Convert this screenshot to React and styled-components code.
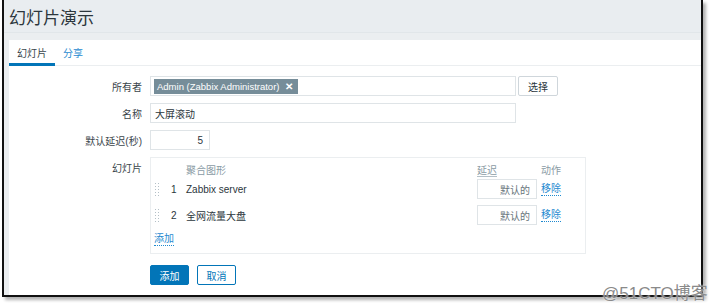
import React from "react";
import styled, { createGlobalStyle } from "styled-components";

const Global = createGlobalStyle`
  html, body { margin: 0; padding: 0; background: #fff; }
  body { font-family: "Liberation Sans", "Noto Sans CJK SC", sans-serif; color: #2b363c; }
  * { box-sizing: border-box; }
`;

const Page = styled.div`
  position: relative;
  width: 712px;
  height: 306px;
  overflow: hidden;
  padding-left: 2px;
`;

const Frame = styled.div`
  width: 701px;
  height: 297px;
  background: #ebeef0;
  border-left: 2px solid #111;
  border-right: 2px solid #111;
  border-bottom: 2px solid #111;
  box-shadow: 3px 3px 3px rgba(0, 0, 0, 0.3);
  display: flex;
  flex-direction: column;
`;

const Header = styled.div`
  height: 33px;
  padding-left: 5px;
  display: flex;
  align-items: center;
  border-bottom: 1px solid #e1e6e9;
  background: #e9edf0;
`;

const Title = styled.h1`
  margin: 0;
  font-size: 17px;
  font-weight: normal;
  color: #2b363c;
`;

const Card = styled.div`
  margin: 7px 0 0 5px;
  flex: 1;
  background: #fff;
`;

const Tabs = styled.div`
  display: flex;
  height: 26px;
  border-bottom: 1px solid #ebeef0;
`;

const Tab = styled.div`
  height: 26px;
  padding: 2px 8px 0 8px;
  font-size: 10px;
  display: flex;
  align-items: center;
  color: ${(p) => (p.$active ? "#3a454b" : "#1f8ad0")};
  border-bottom: 3px solid ${(p) => (p.$active ? "#0275b8" : "transparent")};
  margin-bottom: -1px;
`;

const Form = styled.div`
  display: grid;
  grid-template-columns: 133px auto;
  column-gap: 8px;
  row-gap: 7px;
  padding-top: 10px;
  align-items: center;
`;

const Label = styled.div`
  text-align: right;
  font-size: 10px;
  color: #3a454b;
  align-self: ${(p) => (p.$top ? "start" : "center")};
  padding-top: ${(p) => (p.$top ? "3px" : "0")};
`;

const Field = styled.div`
  display: flex;
  align-items: center;
  gap: 2px;
`;

const Input = styled.div`
  width: ${(p) => p.$w}px;
  height: 20px;
  border: 1px solid #dfe4e7;
  background: #fff;
  display: flex;
  align-items: center;
  justify-content: ${(p) => (p.$right ? "flex-end" : "flex-start")};
  padding: 0 ${(p) => (p.$right ? "6px" : "2px")} 0 ${(p) => (p.$right ? "2px" : "4px")};
  font-size: 10px;
  color: ${(p) => (p.$placeholder ? "#68757c" : "#2b363c")};
`;

const Tag = styled.span`
  display: inline-flex;
  align-items: center;
  gap: 6px;
  height: 15px;
  padding: 0 5px 0 3px;
  background: #768d99;
  color: #fff;
  font-size: 9.5px;
  margin-left: -1px;
`;

const TagX = styled.span`
  font-weight: bold;
  font-size: 10px;
`;

const Button = styled.div`
  width: ${(p) => p.$w || 40}px;
  height: 20px;
  display: flex;
  align-items: center;
  justify-content: center;
  font-size: 10px;
  border: 1px solid ${(p) => (p.$primary ? "#0275b8" : p.$outline ? "#0275b8" : "#cfd6db")};
  background: ${(p) => (p.$primary ? "#0275b8" : "#fff")};
  color: ${(p) => (p.$primary ? "#fff" : p.$outline ? "#0275b8" : "#2b363c")};
  border-radius: 2px;
`;

const Table = styled.div`
  width: 436px;
  border: 1px solid #ebeef0;
  padding: 0 0 6px 3px;
  display: grid;
  grid-template-columns: 6px 26px 291px 60px auto;
  grid-template-rows: 21px 26px 26px 16px;
  font-size: 10px;
`;

const Th = styled.div`
  grid-column: ${(p) => p.$col};
  color: #8a9ba4;
  align-self: center;
  padding-top: 1px;
  padding-left: ${(p) => p.$pl || 0}px;
`;

const Underlined = styled.span`
  border-bottom: 1px solid #b4c0c7;
`;

const Cell = styled.div`
  height: 20px;
  display: flex;
  align-items: center;
  padding-left: ${(p) => p.$pl || 0}px;
  color: #2b363c;
`;

const Handle = styled.div`
  width: 6px;
  height: 15px;
  margin-top: 3px;
  background-image: radial-gradient(circle, #b4c0c7 0.8px, transparent 1px);
  background-size: 3px 3px;
`;

const Link = styled.span`
  color: #1f8ad0;
  border-bottom: 1px dotted #1f8ad0;
  line-height: 13px;
`;

const AddCell = styled.div`
  grid-column: 1 / 4;
  display: flex;
  align-items: center;
  font-size: 10px;
`;

const Buttons = styled.div`
  display: flex;
  gap: 8px;
  margin-top: 4px;
`;

const Watermark = styled.div`
  position: absolute;
  left: 602px;
  top: 279px;
  font-size: 17px;
  color: #8a8a8a;
  font-family: "Liberation Sans", "Noto Sans CJK SC", sans-serif;
  white-space: nowrap;
  text-shadow: 0 0 2px #fff;
`;

const rows = [
  { n: 1, name: "Zabbix server" },
  { n: 2, name: "全网流量大盘" },
];

export default function App() {
  return (
    <Page>
      <Global />
      <Frame>
        <Header>
          <Title>幻灯片演示</Title>
        </Header>
        <Card>
          <Tabs>
            <Tab $active>幻灯片</Tab>
            <Tab>分享</Tab>
          </Tabs>
          <Form>
            <Label>所有者</Label>
            <Field>
              <Input $w={366}>
                <Tag>
                  Admin (Zabbix Administrator) <TagX>✕</TagX>
                </Tag>
              </Input>
              <Button $w={40}>选择</Button>
            </Field>

            <Label>名称</Label>
            <Field>
              <Input $w={366}>大屏滚动</Input>
            </Field>

            <Label>默认延迟(秒)</Label>
            <Field>
              <Input $w={60} $right>5</Input>
            </Field>

            <Label $top>幻灯片</Label>
            <Table>
              <Th $col="3">聚合图形</Th>
              <Th $col="4">
                <Underlined>延迟</Underlined>
              </Th>
              <Th $col="5" $pl={4}>动作</Th>
              {rows.map((r) => (
                <React.Fragment key={r.n}>
                  <Handle />
                  <Cell $pl={11}>{r.n}</Cell>
                  <Cell>{r.name}</Cell>
                  <Input $w={60} $right $placeholder>默认的</Input>
                  <Cell $pl={4}>
                    <Link>移除</Link>
                  </Cell>
                </React.Fragment>
              ))}
              <AddCell>
                <Link>添加</Link>
              </AddCell>
            </Table>

            <div />
            <Buttons>
              <Button $primary $w={39}>添加</Button>
              <Button $outline $w={39}>取消</Button>
            </Buttons>
          </Form>
        </Card>
      </Frame>
      <Watermark>@51CTO博客</Watermark>
    </Page>
  );
}
